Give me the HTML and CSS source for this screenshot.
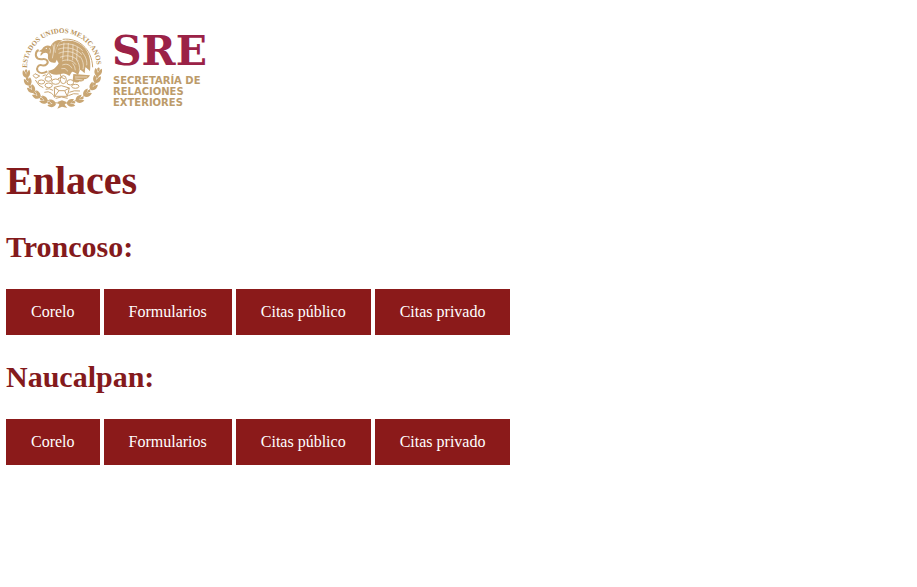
FILE: index.html
```html
<!DOCTYPE html>
<html lang="es">
<head>
<meta charset="utf-8">
<meta name="viewport" content="width=device-width, initial-scale=1">
<title>Enlaces</title>
<link rel="stylesheet" href="styles.css">
</head>
<body>
<header>
<svg class="logo" viewBox="6 6 211 125" width="211" height="125" role="img" aria-label="SRE, Secretaría de Relaciones Exteriores">
  <defs>
    <path id="arc" d="M27 70L27 68A35 35 0 0 1 97 68L97 72"/>
    <g id="leaf">
      <path d="M0 12C-12 8-13-3-9-12C-4-9-2-3 0 2C1-3 5-9 10-12C14-2 11 9 0 12Z"/>
      <path d="M-4-10Q0-18 4-11Q3-5 0-2Q-3-5-4-10Z"/>
    </g>
  </defs>
  <text class="seal-text"><textPath href="#arc" startOffset="2">ESTADOS UNIDOS MEXICANOS</textPath></text>
  <g class="seal" transform="translate(0 10) scale(.3333)">
    <!-- wreath -->
    <path class="line" d="M80 188C88 238 130 280 186 280C240 280 280 244 292 188"/>
    <use href="#leaf" transform="translate(79 192) rotate(-5)"/>
    <use href="#leaf" transform="translate(84 216) rotate(-18)"/>
    <use href="#leaf" transform="translate(95 238) rotate(-34)"/>
    <use href="#leaf" transform="translate(111 256) rotate(-48)"/>
    <use href="#leaf" transform="translate(132 271) rotate(-62)"/>
    <use href="#leaf" transform="translate(156 281) rotate(-76)"/>
    <use href="#leaf" transform="translate(294 187) rotate(8)"/>
    <use href="#leaf" transform="translate(290 208) rotate(14)"/>
    <use href="#leaf" transform="translate(279 230) rotate(30)"/>
    <use href="#leaf" transform="translate(260 250) rotate(48)"/>
    <use href="#leaf" transform="translate(238 268) rotate(64)"/>
    <use href="#leaf" transform="translate(212 279) rotate(78)"/>
    <path d="M172 276L186 271L200 276L194 284L202 294L186 290L172 296L178 284Z"/>
    <!-- rim behind the wing -->
    <path class="line" d="M188 88C234 82 276 116 278 172"/>
    <!-- head -->
    <path d="M126 118C132 106 144 104 152 109C158 94 174 86 188 92C180 95 176 100 172 106C168 116 170 126 178 134L166 158C150 160 142 150 144 138C145 130 139 126 130 130L122 138C121 132 122 128 126 126L116 124Z"/>
    <!-- snake -->
    <path class="snake" d="M116 120C106 124 104 140 114 146C124 151 134 143 141 151C148 160 136 169 127 166C115 162 108 174 113 183C119 192 132 190 142 184"/>
    <!-- wing -->
    <path d="M180 96C206 86 236 94 254 114C268 130 274 152 270 184C264 177 260 174 256 172L254 190C248 184 244 181 240 179L234 196C228 188 222 186 216 185L208 198C200 192 192 188 182 192C166 198 150 192 144 182C158 182 168 174 176 160C166 146 162 118 180 96Z"/>
    <path class="cut" d="M176 106C204 96 230 104 248 122M174 118C202 108 228 116 246 134M176 130C200 120 222 124 240 142M180 142C204 132 224 140 236 154M186 153C204 146 220 152 228 164M187 165C200 160 210 164 216 175M184 176Q196 171 204 184M246 126C258 140 262 154 260 166M239 138C249 150 252 164 249 178M229 149C237 159 240 170 238 181M218 160Q226 170 226 181"/>
    <path class="cut" d="M192 98L188 148M205 99L203 152M219 103L218 151M232 111L230 150M148 114Q154 120 150 130M158 104Q164 115 157 145M165 101Q162 112 166 128"/>
    <circle class="eye" cx="139" cy="115" r="2"/>
    <!-- tail and claws -->
    <path d="M220 192L270 196C266 204 260 208 252 208C253 213 246 216 238 214C238 219 226 219 218 212Z"/>
    <path class="cut" d="M225 201H262M226 207L248 210"/>
    <g class="pads">
      <path d="M150 184L137 199M148 190L155 201M178 186L184 202L174 206M184 202L195 207"/>
      <!-- cactus pads -->
      <ellipse cx="145" cy="207" rx="10" ry="7"/>
      <ellipse cx="167" cy="215" rx="12" ry="8"/>
      <ellipse cx="190" cy="209" rx="9" ry="12"/>
      <ellipse cx="211" cy="217" rx="10" ry="8"/>
      <ellipse cx="146" cy="226" rx="11" ry="7"/>
      <ellipse cx="124" cy="216" rx="10" ry="6"/>
      <ellipse cx="226" cy="229" rx="11" ry="6"/>
      <path d="M105 191L119 198L108 205L99 197ZM106 210L117 226L130 233M128 198L137 194"/>
      <!-- rock and water -->
      <path d="M163 232L184 227L208 234L202 259H164ZM163 232L177 242L164 259M208 234L194 242L202 259M177 242H194M137 238Q147 233 159 241M133 247Q145 242 155 250Q162 256 164 263M208 247Q222 240 240 243M205 257Q221 248 236 252M167 265Q184 257 203 265"/>
    </g>
  </g>
  <text class="brand" x="112" y="65">SRE</text>
  <text class="brand-name"><tspan x="113" y="84">SECRETARÍA DE</tspan><tspan x="113" y="95">RELACIONES</tspan><tspan x="113" y="106">EXTERIORES</tspan></text>
</svg>
</header>
<main>
  <h1>Enlaces</h1>
  <section>
    <h2>Troncoso:</h2>
    <nav class="links" aria-label="Troncoso">
      <a href="#">Corelo</a>
      <a href="#">Formularios</a>
      <a href="#">Citas público</a>
      <a href="#">Citas privado</a>
    </nav>
  </section>
  <section>
    <h2>Naucalpan:</h2>
    <nav class="links" aria-label="Naucalpan">
      <a href="#">Corelo</a>
      <a href="#">Formularios</a>
      <a href="#">Citas público</a>
      <a href="#">Citas privado</a>
    </nav>
  </section>
</main>
</body>
</html>
```
FILE: styles.css
```css
body {
  margin: 6px;
  background: #fff;
  color: #841a1c;
  font-family: "Liberation Serif", "Times New Roman", serif;
  font-size: 16px;
}

.logo {
  display: block;
}

.seal {
  fill: #c9a673;
}

.seal .line,
.seal .pads,
.seal .snake {
  fill: none;
  stroke: #c9a673;
  stroke-width: 3;
}

.seal .snake {
  stroke-width: 6;
}

.seal .cut {
  fill: none;
  stroke: #f6eddf;
  stroke-width: 2;
}

.seal .eye {
  fill: #fff;
}

.seal-text {
  fill: #b8935c;
  font-size: 7px;
  font-weight: bold;
}

.brand {
  fill: #9b2247;
  font-family: "DejaVu Serif", serif;
  font-size: 41px;
  font-weight: bold;
}

.brand-name {
  fill: #bc9b6a;
  font-family: "DejaVu Sans", sans-serif;
  font-size: 10px;
  font-weight: bold;
}

h1 {
  margin: 27px 0 26px;
  font-size: 40px;
  line-height: 46px;
}

h2 {
  margin: 25px 0;
  font-size: 30px;
  line-height: 34px;
}

.links {
  display: flex;
  flex-wrap: wrap;
  gap: 4px;
}

.links a {
  padding: 14px 25px;
  background: #8b1a1a;
  color: #fff;
  line-height: 18px;
  text-decoration: none;
}
```
